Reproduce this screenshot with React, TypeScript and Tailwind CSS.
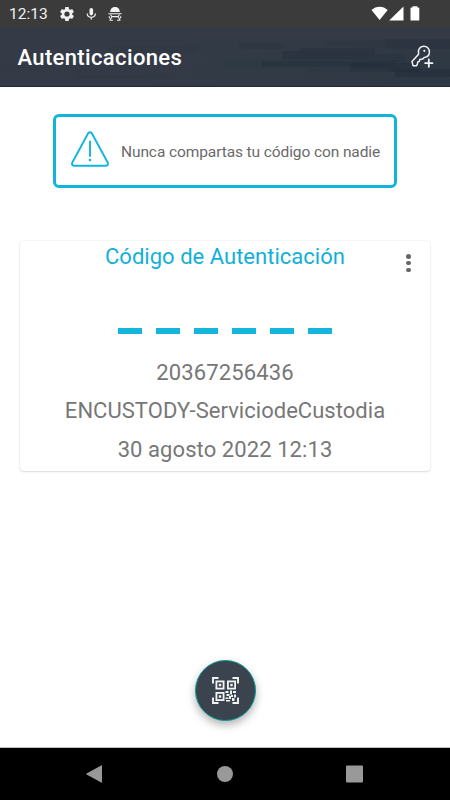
import type { ReactNode } from 'react';
import { clsx } from 'clsx';

const codeSlots = [0, 1, 2, 3, 4, 5];

const details = [
  { text: '20367256436', spacing: 'tracking-[0.14px]' },
  { text: 'ENCUSTODY-ServiciodeCustodia', spacing: 'tracking-[0.03px]' },
  { text: '30 agosto 2022 12:13', spacing: 'tracking-[0.08px]' },
];

// x, y, width, height, fill
const streaks: [number, number, number, number, string][] = [
  [0, 6, 190, 14, '#363c47'],
  [0, 36, 150, 10, '#333b47'],
  [108, 19, 92, 5, '#303842'],
  [130, 23, 65, 5, '#2f3843'],
  [239, 16, 44, 6, '#2b3440'],
  [325, 13, 60, 6, '#2d3641'],
  [385, 12, 65, 10, '#29323e'],
  [282, 24, 87, 9, '#26303c'],
  [300, 21, 75, 8, '#29323e'],
  [369, 27, 36, 8, '#28323e'],
  [405, 22, 45, 8, '#313a46'],
  [190, 29, 90, 5, '#313c47'],
  [225, 32, 125, 10, '#2d3844'],
  [262, 34, 133, 6, '#26313d'],
  [350, 36, 70, 9, '#222e3b'],
  [308, 42, 80, 3, '#2e3945'],
  [395, 42, 55, 8, '#222e3b'],
  [75, 48, 95, 3, '#303944'],
];

function StatusBar() {
  return (
    <div className="flex h-[27px] items-center justify-between bg-[#3b3b3b] pl-[9px] pr-[30px] text-[#f1f1f1]">
      <div className="flex items-center">
        <span className="w-[50px] pt-px text-[15.5px] leading-[27px]">12:13</span>
        <svg width="16" height="16" viewBox="1 1 22 22" fill="currentColor">
          <path d="M19.14 12.94c.04-.3.06-.61.06-.94 0-.32-.02-.64-.07-.94l2.03-1.58a.49.49 0 0 0 .12-.61l-1.92-3.32a.49.49 0 0 0-.59-.22l-2.39.96c-.5-.38-1.03-.7-1.62-.94l-.36-2.54a.48.48 0 0 0-.48-.41h-3.84c-.24 0-.43.17-.47.41l-.36 2.54c-.59.24-1.13.57-1.62.94l-2.39-.96c-.22-.08-.47 0-.59.22L2.74 8.87c-.12.21-.08.47.12.61l2.03 1.58c-.05.3-.09.63-.09.94s.02.64.07.94l-2.03 1.58a.49.49 0 0 0-.12.61l1.92 3.32c.12.22.37.29.59.22l2.39-.96c.5.38 1.03.7 1.62.94l.36 2.54c.05.24.24.41.48.41h3.84c.24 0 .44-.17.47-.41l.36-2.54c.59-.24 1.13-.56 1.62-.94l2.39.96c.22.08.47 0 .59-.22l1.92-3.32a.49.49 0 0 0-.12-.61zM12 15.6A3.6 3.6 0 1 1 12 8.4a3.6 3.6 0 0 1 0 7.2z" />
        </svg>
        <svg className="ml-2.5" width="13" height="14" viewBox="0 0 13 14" fill="none">
          <rect x="4.5" y="1" width="3.6" height="7.4" rx="1.8" fill="currentColor" />
          <path d="M2.2 6.5c.2 2.5 1.8 3.8 4.1 3.8s3.9-1.3 4.1-3.8M6.3 10.2v2.4" stroke="currentColor" strokeWidth="1.3" />
        </svg>
        <svg className="ml-2.5" width="14" height="14" viewBox="0 0 14 14" fill="none">
          <path d="M2.2 5C2.2 1.9 4.3 0 7 0s4.8 1.9 4.8 5z" fill="currentColor" />
          <path d="M.8 6.7h12.4M2.8 8l1.2 1.6h6L11.2 8M1.2 9.5l.3 1.5M12.8 9.5l-.3 1.5M3.6 10 2 13.2M10.4 10l1.6 3.2M2 13.3h2.5M9.5 13.3H12" stroke="currentColor" strokeWidth="1.1" strokeLinecap="round" />
        </svg>
      </div>
      <svg width="49" height="16" viewBox="0 0 49 16" fill="#fff">
        <path d="M.5 4.1C5-.4 12.2-.4 16.7 4.1L8.6 14z" />
        <path d="M32.5.5v14H18.2z" />
        <path d="M41.5.2h4.8v1.2h1.3q.7 0 .7.7v11.8q0 .7-.7.7h-7.4q-.7 0-.7-.7V2.1q0-.7.7-.7h1.3z" />
      </svg>
    </div>
  );
}

function KeyPlusIcon() {
  return (
    <svg width="24" height="24" viewBox="0 0 24 24" fill="none" stroke="#f3f4f6" strokeWidth="1.5" strokeLinejoin="round" strokeLinecap="round">
      <path d="M12.5 14.1 9.8 14.6 9.3 16.4 7.8 17 7.5 18.6 6.6 20.7 3 20.7 2 16.4 8.6 9.3C7.5 4.8 9.8 1.3 13.7 1.3c3.6 0 5.8 2.6 5.7 5.8-.1 3.1-2.2 5.2-5.2 5.4z" />
      <circle cx="14.3" cy="5.8" r="1.1" fill="#f3f4f6" stroke="none" />
      <path d="M18.8 14.4v7.4M15.1 18.1h7.4" strokeWidth="1.8" />
    </svg>
  );
}

function Header() {
  return (
    <header className="relative h-[60px] border-b border-[#1d2b3c] bg-[#343b46]">
      <svg className="absolute inset-0" width="450" height="59" viewBox="0 0 450 59" aria-hidden="true">
        <defs>
          <linearGradient id="shade" x1="0" x2="1">
            <stop offset="0.3" stopColor="#2b3743" stopOpacity="0" />
            <stop offset="0.9" stopColor="#2b3743" stopOpacity="0.6" />
          </linearGradient>
        </defs>
        <rect y="14" width="450" height="45" fill="url(#shade)" />
        {streaks.map(([x, y, w, h, fill]) => (
          <rect key={`${x}-${y}`} x={x} y={y} width={w} height={h} fill={fill} opacity="0.55" />
        ))}
      </svg>
      <div className="relative flex h-full items-center justify-between pl-[17.5px] pr-4">
        <h1 className="pt-0.5 text-[22px] font-medium leading-[60px] tracking-[0.36px] text-white">Autenticaciones</h1>
        <button aria-label="Agregar clave">
          <KeyPlusIcon />
        </button>
      </div>
    </header>
  );
}

function Warning() {
  return (
    <div className="mx-[53px] mt-[27px] flex h-[74px] items-center rounded-[6px] border-[3px] border-[#11b5dc] pl-[15px]">
      <svg className="-mt-1" width="38" height="36" viewBox="0 0 38 36" fill="none" stroke="#11b5dc" strokeWidth="1.9" strokeLinecap="round" strokeLinejoin="round">
        <path d="M17.2 2.2q1.8-2 3.6 0L36.7 31.5q1 3-1.7 3.2H3q-2.7-.2-1.7-3.2z" />
        <path d="M19 10.5V25" />
        <circle cx="19" cy="29" r="1.3" fill="#11b5dc" stroke="none" />
      </svg>
      <p className="ml-3 whitespace-nowrap pt-0.5 text-[15.5px] leading-5 tracking-[-0.1px] text-[#6a6a6a]">
        Nunca compartas tu código con nadie
      </p>
    </div>
  );
}

function CodeCard() {
  return (
    <section className="relative mx-5 mt-[53px] h-[230px] rounded-[4px] bg-white text-center shadow-[0_0_2px_rgba(0,0,0,0.11),0_1px_2px_rgba(0,0,0,0.12)]">
      <h2 className="text-[22px] leading-8 tracking-[0.02px] text-[#11b0da]">Código de Autenticación</h2>
      <button aria-label="Opciones" className="absolute right-[19px] top-[13px] flex flex-col gap-[2.2px]">
        <span className="size-[4.6px] rounded-full bg-[#666]" />
        <span className="size-[4.6px] rounded-full bg-[#666]" />
        <span className="size-[4.6px] rounded-full bg-[#666]" />
      </button>
      <div className="mt-[55px] flex justify-center gap-3.5">
        {codeSlots.map((slot) => (
          <span key={slot} className="h-1.5 w-6 bg-[#14b6dc]" />
        ))}
      </div>
      <div className="mt-5">
        {details.map((detail) => (
          <p key={detail.text} className={clsx('text-[22px] leading-[38.4px] text-[#777]', detail.spacing)}>
            {detail.text}
          </p>
        ))}
      </div>
    </section>
  );
}

function QrFinder({ x, y }: { x: number; y: number }) {
  return (
    <>
      <rect x={x + 0.9} y={y + 0.9} width="7.2" height="7.2" stroke="#f2f3f4" strokeWidth="1.8" />
      <rect x={x + 3.3} y={y + 3.3} width="2.4" height="2.4" fill="#f2f3f4" />
    </>
  );
}

function ScanButton() {
  return (
    <button
      aria-label="Escanear QR"
      className="flex size-[61px] items-center justify-center rounded-full border border-[#079b91] bg-[#3b434e] shadow-[0_4px_8px_rgba(0,0,0,0.3)]"
    >
      <svg width="27" height="27" viewBox="0 0 27 27" fill="none">
        <path d="M1 6.5V1H6.5M20.5 1H26V6.5M26 20.5V26H20.5M6.5 26H1V20.5" stroke="#f2f3f4" strokeWidth="1.9" />
        <QrFinder x={3.5} y={3.5} />
        <QrFinder x={15} y={3.5} />
        <QrFinder x={3.5} y={15} />
        <path
          d="M13.5 14h3v2h-3zM18 13.5h2v4h-2zM21 14h3v2h-3zM14.5 17h3v2h-3zM19 18h2v2h-2zM22 17.5h2v3h-2zM13.5 20.5h3v1.5h-3zM17 19h2v3h-2zM20 21h2.5v3H20zM14 23h4v1.5h-4z"
          fill="#f2f3f4"
        />
      </svg>
    </button>
  );
}

function NavButton({ label, children }: { label: string; children: ReactNode }) {
  return (
    <button aria-label={label} className="flex w-[130px] justify-center">
      <svg width="18" height="18" viewBox="0 0 18 18" fill="#999">
        {children}
      </svg>
    </button>
  );
}

function NavigationBar() {
  return (
    <nav className="flex h-[53px] items-center justify-center border-t border-[#bdbdbd] bg-black">
      <NavButton label="Atrás">
        <path d="M15.2.4q.8-.4.8.4v16.4q0 .8-.8.4L.6 9.5q-.8-.5 0-1z" />
      </NavButton>
      <NavButton label="Inicio">
        <circle cx="9" cy="9" r="8" />
      </NavButton>
      <NavButton label="Recientes">
        <rect x="0" y="0.5" width="17" height="17" rx="1" />
      </NavButton>
    </nav>
  );
}

export default function App() {
  return (
    <div className="flex h-[800px] w-[450px] flex-col overflow-hidden bg-white font-['Roboto',sans-serif]">
      <StatusBar />
      <Header />
      <main className="flex flex-1 flex-col">
        <Warning />
        <CodeCard />
        <div className="mb-[26px] mt-auto flex justify-center">
          <ScanButton />
        </div>
      </main>
      <NavigationBar />
    </div>
  );
}
